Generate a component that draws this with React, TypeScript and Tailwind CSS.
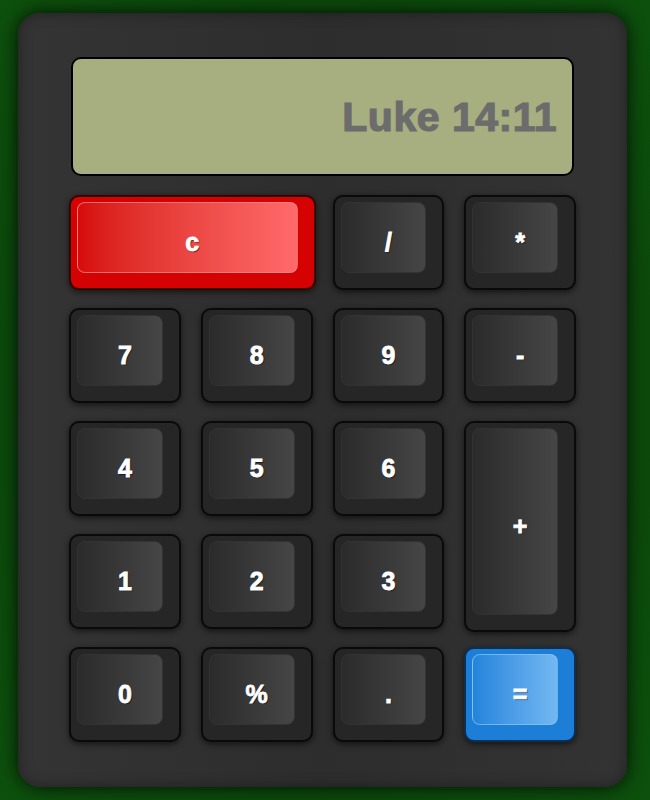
import React from "react";

type Tone = "dark" | "red" | "blue";

interface KeyDef {
  label: string;
  tone?: Tone;
  cls?: string;
}

const keys: KeyDef[] = [
  { label: "c", tone: "red", cls: "col-span-2 -mr-[3px]" },
  { label: "/" },
  { label: "*" },
  { label: "7" },
  { label: "8" },
  { label: "9" },
  { label: "-" },
  { label: "4" },
  { label: "5" },
  { label: "6" },
  { label: "+", cls: "row-span-2 -mb-[3px]" },
  { label: "1" },
  { label: "2" },
  { label: "3" },
  { label: "0" },
  { label: "%" },
  { label: "." },
  { label: "=", tone: "blue" },
];

const outerTone: Record<Tone, string> = {
  dark: "bg-[#262626] border-[#0a0a0a]",
  red: "bg-[#d40202] border-[#3a0000]",
  blue: "bg-[#1c7ed6] border-[#0d2f52]",
};

const faceTone: Record<Tone, string> = {
  dark: "bg-gradient-to-r from-[#2b2b2b] to-[#464646] border-[#333333]",
  red: "bg-gradient-to-r from-[#d60a0a] to-[#ff6a6a] border-[#ff8b8b]/70",
  blue: "bg-gradient-to-r from-[#2284dc] to-[#72b8f2] border-[#8cc6f5]/70",
};

function Key({ label, tone = "dark", cls = "" }: KeyDef) {
  return (
    <button
      className={`relative rounded-[10px] border-2 shadow-[0_2px_6px_rgba(0,0,0,0.6)] ${outerTone[tone]} ${cls}`}
    >
      <span
        className={`absolute left-[6px] top-[5px] right-[16px] bottom-[15px] rounded-[8px] border ${faceTone[tone]}`}
      />
      <span className="relative text-[25px] font-bold text-white [-webkit-text-stroke:0.8px_white] [text-shadow:1px_1px_1px_rgba(0,0,0,0.7)]">
        {label}
      </span>
    </button>
  );
}

export default function App() {
  return (
    <div className="w-[650px] h-[800px] overflow-hidden bg-[radial-gradient(ellipse_at_center,#083a08_0%,#0d500d_100%)] pt-[13px] pl-[18px] font-['Liberation_Sans',Arial,sans-serif]">
      <div className="w-[609px] h-[774px] rounded-[22px] bg-gradient-to-r from-[#343434] via-[#2d2d2d] to-[#333333] shadow-[0_0_18px_rgba(0,0,0,0.8),inset_0_0_14px_rgba(0,0,0,0.35)] pt-[44px] px-[51px]">
        <div className="mx-[2px] h-[119px] rounded-[10px] border-2 border-black bg-[#a7ae7f] flex items-center justify-end pr-[15px] pt-[2px]">
          <span className="text-[41px] font-bold text-[#6c6c6c] [-webkit-text-stroke:1.2px_#6c6c6c] tracking-[0.5px]">
            Luke 14:11
          </span>
        </div>
        <div className="mt-[19px] grid grid-cols-4 grid-rows-[repeat(5,95px)] gap-x-[20px] gap-y-[18px]">
          {keys.map((k) => (
            <Key key={k.label} {...k} />
          ))}
        </div>
      </div>
    </div>
  );
}
